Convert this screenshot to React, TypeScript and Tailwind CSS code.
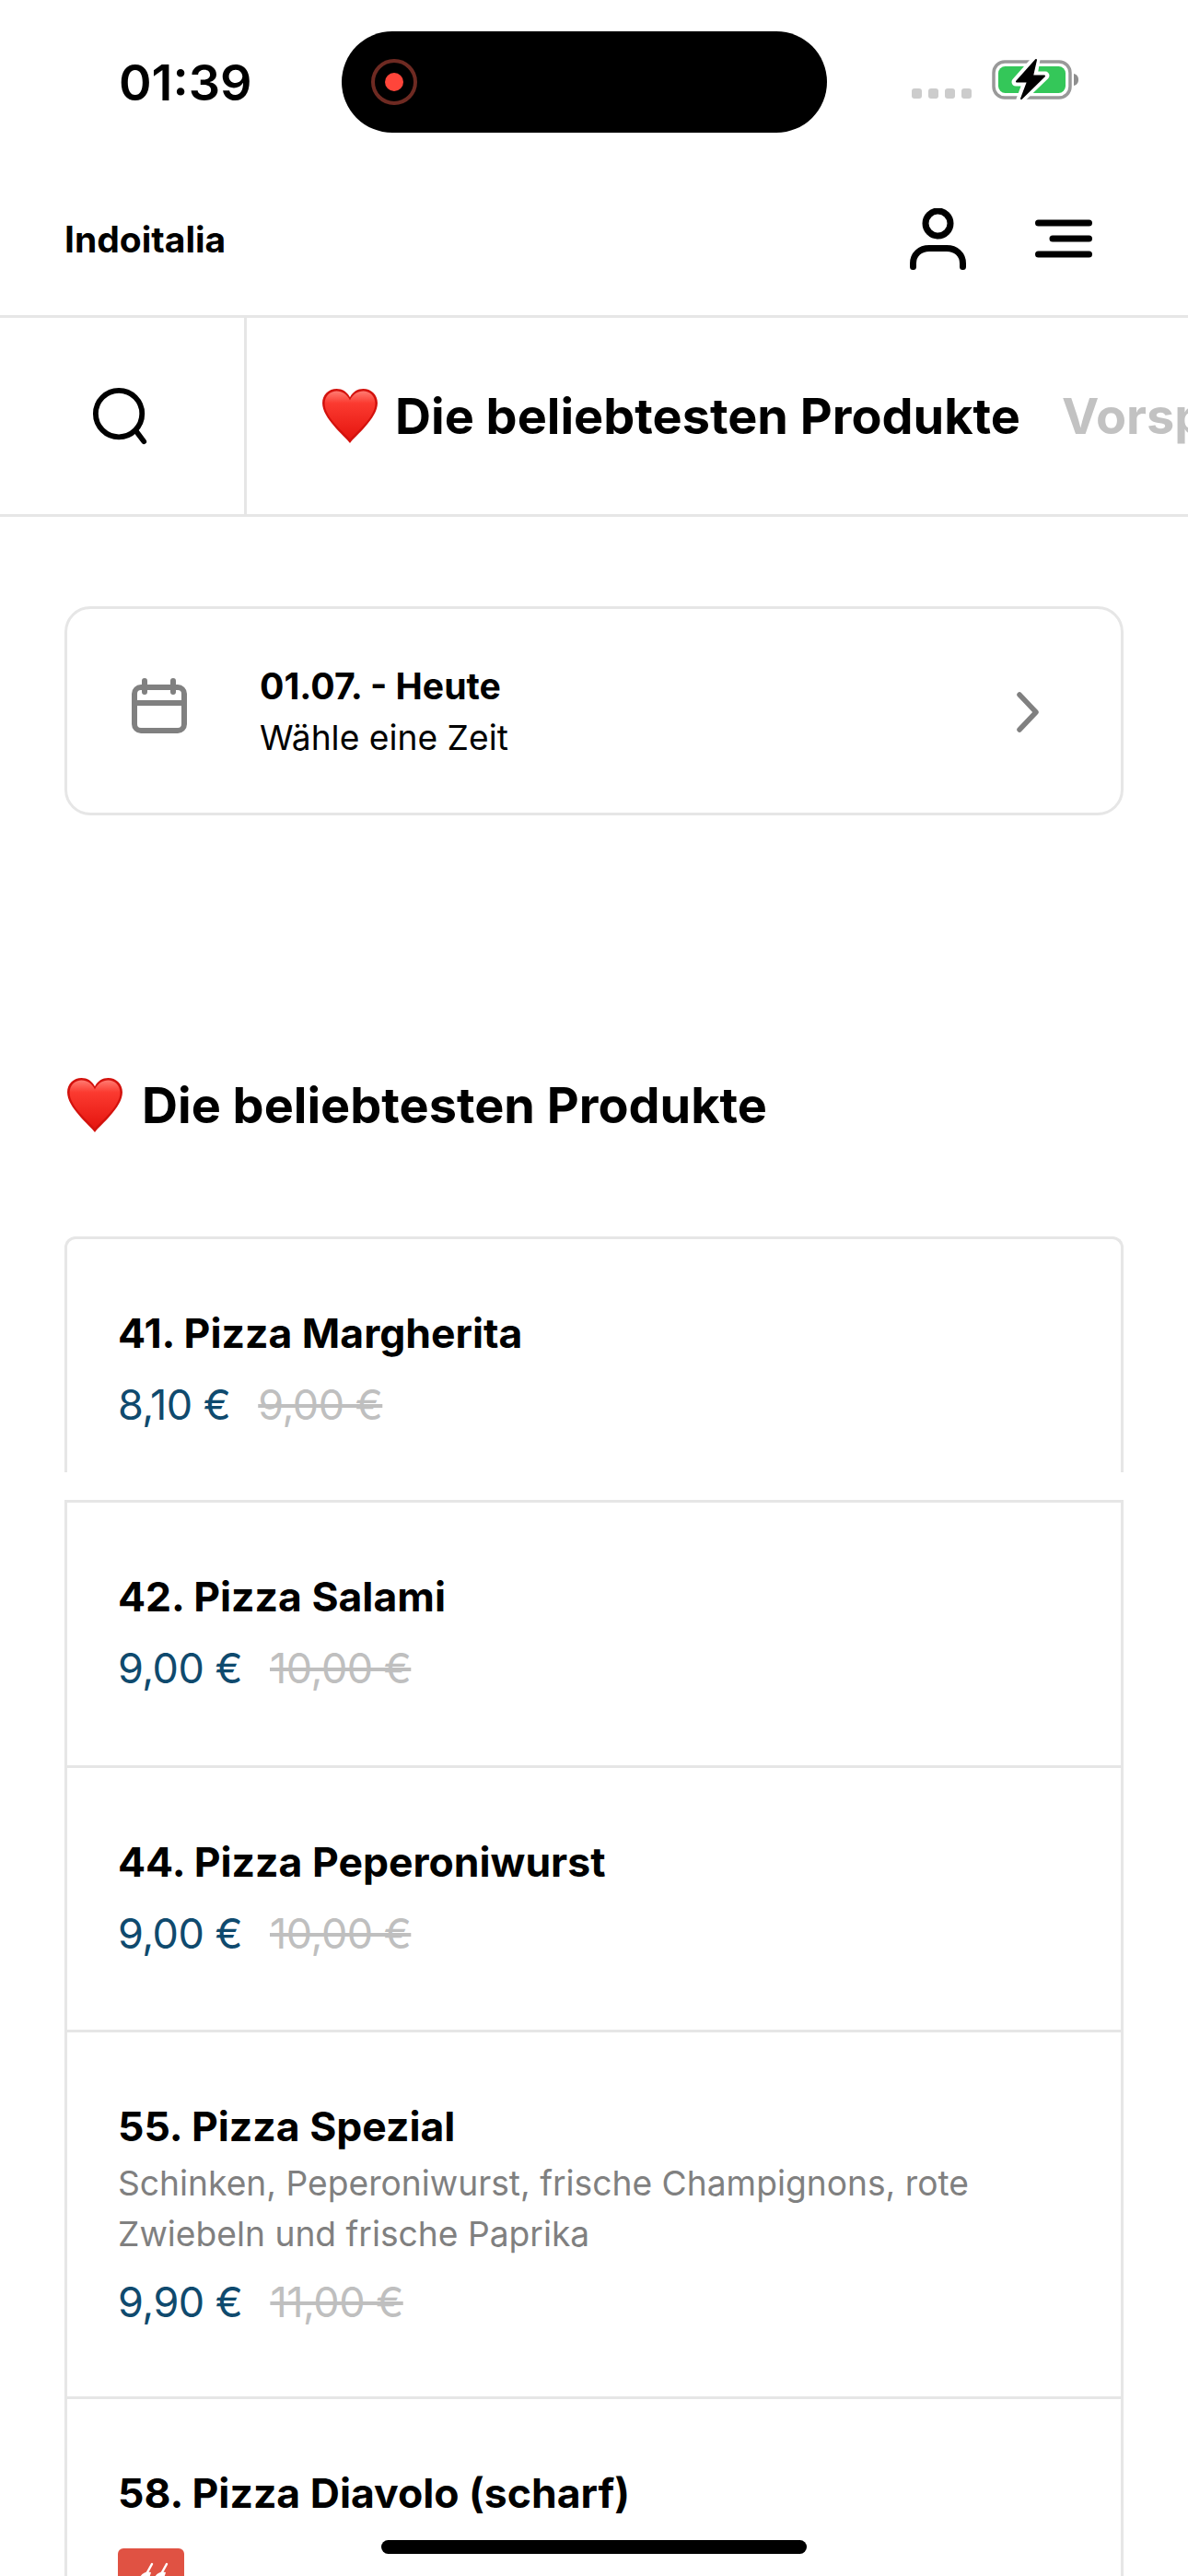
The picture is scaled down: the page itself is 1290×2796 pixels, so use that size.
import React from "react";

function Heart({ className }: { className: string }) {
  return (
    <svg className={className} viewBox="0 0 60 60">
      <defs>
        <linearGradient id="hg" x1="0" y1="0" x2="0" y2="1">
          <stop offset="0" stopColor="#ff7a70" />
          <stop offset="0.25" stopColor="#fb3a30" />
          <stop offset="1" stopColor="#e5150f" />
        </linearGradient>
      </defs>
      <path
        d="M30 58 C24 50 1 32 1 16 C1 7 8 1 16 1 C22 1 27 4 30 10 C33 4 38 1 44 1 C52 1 59 7 59 16 C59 32 36 50 30 58 Z"
        fill="#d3120d"
      />
      <path
        d="M30 54 C24 47 3.5 31 3.5 16.500 C3.500 8.500 9.500 3.500 16 3.500 C22 3.500 27 7 30 13 C33 7 38 3.500 44 3.500 C50.500 3.500 56.500 8.500 56.500 16.500 C56.500 31 36 47 30 54 Z"
        fill="url(#hg)"
      />
    </svg>
  );
}

type Item = { title: string; price: string; old: string; desc?: string[]; h: string };

const items: Item[] = [
  { title: "42. Pizza Salami", price: "9,00 €", old: "10,00 €", h: "h-[288px]" },
  { title: "44. Pizza Peperoniwurst", price: "9,00 €", old: "10,00 €", h: "h-[287px]" },
  {
    title: "55. Pizza Spezial",
    price: "9,90 €",
    old: "11,00 €",
    desc: ["Schinken, Peperoniwurst, frische Champignons, rote", "Zwiebeln und frische Paprika"],
    h: "h-[398px]",
  },
];

function Row({ item }: { item: Item }) {
  return (
    <div className={`${item.h} border-x-[3px] border-t-[3px] border-[#e6e6e6] px-[55px] pt-[75px]`}>
      <div className="text-[44.5px] leading-[54px] font-bold text-black">{item.title}</div>
      {item.desc && (
        <div className="mt-[7px] text-[37.2px] leading-[55px] text-[#808080]">
          {item.desc.map((d) => (
            <div key={d}>{d}</div>
          ))}
        </div>
      )}
      <Price price={item.price} old={item.old} className={item.desc ? "mt-[19px]" : "mt-[23px]"} />
    </div>
  );
}

function Price({ price, old, className }: { price: string; old: string; className: string }) {
  return (
    <div className={`flex items-center gap-[30px] text-[45px] leading-[56px] tracking-[-0.5px] ${className}`}>
      <span className="text-[#0f4a6e]">{price}</span>
      <span className="text-[#bfbfbf] line-through">{old}</span>
    </div>
  );
}

export default function App() {
  return (
    <div className="relative h-[2796px] w-[1290px] overflow-hidden bg-white font-['Inter',sans-serif] text-black">
      {/* status bar */}
      <div className="flex h-[176px] items-start pt-[34px]">
        <div className="ml-[129px] flex h-[110px] w-[242px] items-center text-[54px] font-semibold">01:39</div>
        <div className="flex h-[110px] w-[527px] items-center rounded-[55px] bg-black pl-[32px]">
          <div className="flex h-[50px] w-[50px] items-center justify-center rounded-full border-[4px] border-[#6e2a22]">
            <div className="h-[20px] w-[20px] rounded-full bg-[#ff453a]" />
          </div>
        </div>
        <div className="ml-[92px] flex h-[110px] items-start">
          <div className="mt-[62px] flex gap-[7px]">
            <div className="h-[11px] w-[11px] rounded-[3px] bg-[#cccccc]" />
            <div className="h-[11px] w-[11px] rounded-[3px] bg-[#cccccc]" />
            <div className="h-[11px] w-[11px] rounded-[3px] bg-[#cccccc]" />
            <div className="h-[11px] w-[11px] rounded-[3px] bg-[#cccccc]" />
          </div>
          <svg className="ml-[22px] mt-[28px]" width="96" height="48" viewBox="0 0 96 48">
            <rect x="2" y="5" width="83" height="39" rx="12" fill="none" stroke="#999999" strokeWidth="3.500" />
            <rect x="7" y="10" width="73" height="29" rx="7.500" fill="#34c759" />
            <path d="M89 18 C93 19 94 22 94 24.500 C94 27 93 30 89 31 Z" fill="#8e8e8e" />
            <path d="M48 2 L26 27 L38 27 L31 46 L58 20 L45 20 Z" fill="#000000" stroke="#ffffff" strokeWidth="9" strokeLinejoin="round" />
            <path d="M48 3 L27 26.500 L39 26.500 L32 45 L57 20.500 L44 20.500 Z" fill="#000000" stroke="#000000" strokeWidth="2" strokeLinejoin="round" />
          </svg>
        </div>
      </div>

      {/* header */}
      <div className="flex h-[169px] items-start border-b-[3px] border-[#e6e6e6] pl-[70px]">
        <div className="mt-[60px] w-[918px] text-[39px] leading-[48px] font-bold">Indoitalia</div>
        <svg className="mt-[50px]" width="61" height="67" viewBox="0 0 61 67" fill="none" stroke="#000" strokeWidth="7" strokeLinecap="round">
          <circle cx="30.500" cy="16.500" r="13.500" />
          <path d="M3.500 63.500 V60 C3.500 50 11 43.500 21 43.500 H40 C50 43.500 57.500 50 57.500 60 V63.500" />
        </svg>
        <svg className="ml-[75px] mt-[62px]" width="62" height="42" viewBox="0 0 62 42" fill="none" stroke="#000" strokeWidth="7" strokeLinecap="round">
          <path d="M3.500 4 H58.500 M19 21 H58.500 M3.500 38 H58.500" />
        </svg>
      </div>

      {/* tabs */}
      <div className="flex h-[216px] items-stretch border-b-[3px] border-[#e6e6e6]">
        <div className="flex w-[268px] shrink-0 items-center justify-start border-r-[3px] border-[#e6e6e6] pl-[100px]">
          <svg width="62" height="64" viewBox="0 0 64 66" fill="none" stroke="#000" strokeWidth="6" strokeLinecap="round">
            <circle cx="30" cy="30" r="26" />
            <path d="M49 49 L58 61" />
          </svg>
        </div>
        <div className="flex items-center whitespace-nowrap pl-[81px] text-[54px] font-bold">
          <Heart className="mr-[18px] h-[62px] w-[62px] shrink-0" />
          <span>Die beliebtesten Produkte</span>
          <span className="ml-[45px] text-[#c2c2c2]">Vorspeisen</span>
        </div>
      </div>

      <div className="px-[70px] pt-[97px]">
        {/* calendar card */}
        <div className="flex h-[227px] items-center rounded-[28px] border-[3px] border-[#e6e6e6]">
          <svg className="mb-[12px] ml-[70px]" width="60" height="60" viewBox="0 0 60 60" fill="none" stroke="#808080" strokeWidth="6" strokeLinejoin="round" strokeLinecap="round">
            <rect x="3" y="10" width="54" height="47" rx="7" />
            <path d="M3 27 H57 M14 3 V15 M45 3 V15" />
          </svg>
          <div className="ml-[79px] flex-1">
            <div className="mt-[2px] text-[39.2px] leading-[52px] font-bold">01.07. - Heute</div>
            <div className="mt-[4px] text-[37.2px] leading-[52px]">Wähle eine Zeit</div>
          </div>
          <svg className="mr-[88px] mt-[2px]" width="26" height="46" viewBox="0 0 26 46" fill="none" stroke="#808080" strokeWidth="5.500" strokeLinecap="round" strokeLinejoin="round">
            <path d="M4 4 L22 23 L4 42" />
          </svg>
        </div>

        <div className="mt-[280px] flex items-center whitespace-nowrap text-[54px] leading-[70px] font-bold">
          <Heart className="ml-[2px] mr-[20px] h-[62px] w-[62px] shrink-0" />
          <span>Die beliebtesten Produkte</span>
        </div>

        {/* first card */}
        <div className="mt-[107px] h-[256px] rounded-t-[12px] border-x-[3px] border-t-[3px] border-[#e6e6e6] px-[55px] pt-[75px]">
          <div className="text-[44.5px] leading-[54px] font-bold">41. Pizza Margherita</div>
          <Price price="8,10 €" old="9,00 €" className="mt-[23px]" />
        </div>

        <div className="h-[30px]" />

        {items.map((it) => (
          <Row key={it.title} item={it} />
        ))}

        <div className="border-x-[3px] border-t-[3px] border-[#e6e6e6] px-[55px] pt-[75px]">
          <div className="text-[44.5px] leading-[54px] font-bold">58. Pizza Diavolo (scharf)</div>
          <div className="mt-[33px] flex h-[72px] w-[72px] items-start justify-center rounded-[6px] bg-[#e05243] pt-[14px]">
            <svg width="40" height="40" viewBox="0 0 40 40" fill="none">
              <path d="M6 22 C8 14 14 10 20 12 C18 20 14 26 6 30 Z M22 22 C24 14 30 10 36 12 C34 20 30 26 22 30 Z" fill="#fff" />
              <path d="M16 12 L21 3 M32 12 L37 3" stroke="#fff" strokeWidth="2.500" strokeLinecap="round" />
            </svg>
          </div>
        </div>
      </div>

      {/* home indicator */}
      <div className="absolute left-[414px] top-[2757px] h-[15px] w-[462px] rounded-full bg-black" />
    </div>
  );
}
